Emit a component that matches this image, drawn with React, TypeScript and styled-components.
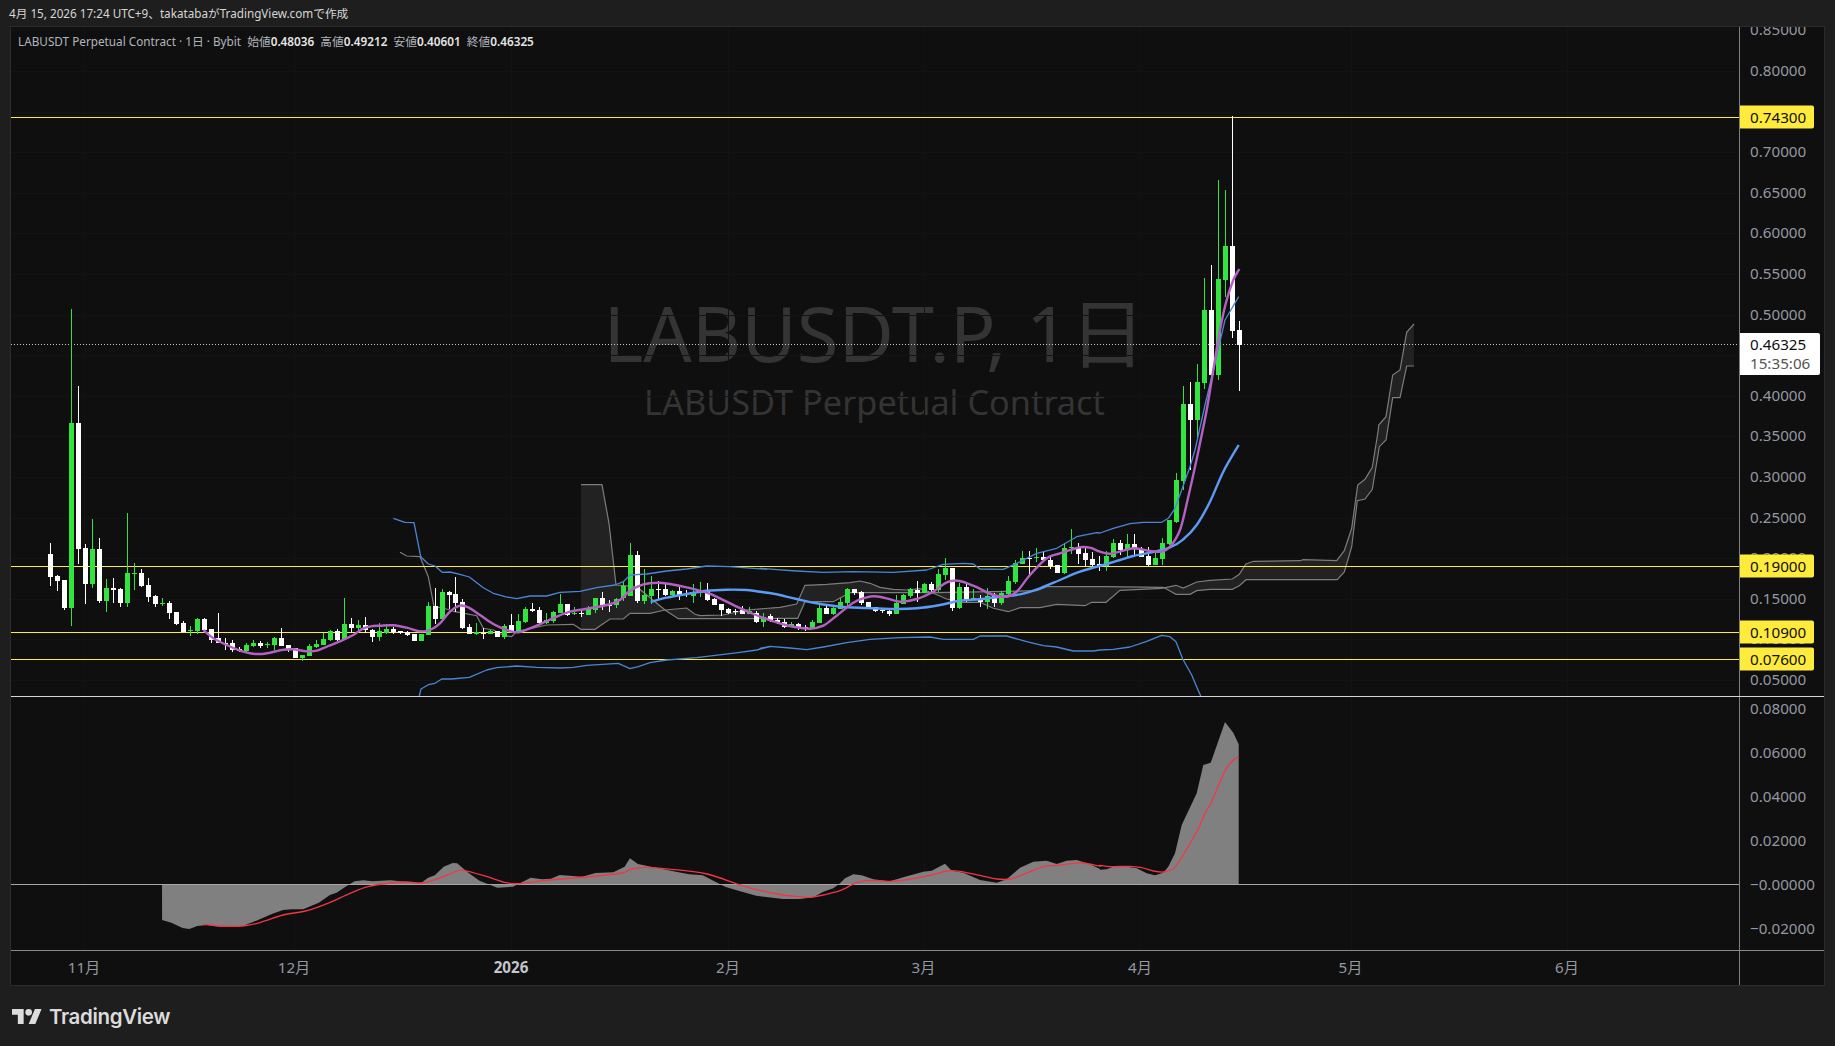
import React from 'react';
import styled, { createGlobalStyle } from 'styled-components';

type Pt = [number, number];
type Row = [string, number, number, number, number];

const FONT = '"Noto Sans", "Noto Sans CJK JP", sans-serif';

const GlobalStyle = createGlobalStyle`
  html, body { margin: 0; padding: 0; background: #1e1e1e; }
  #root { height: 100vh; }
`;

const Page = styled.div`
  height: 1046px;
  display: flex;
  flex-direction: column;
  background: #1e1e1e;
  font-family: ${FONT};
  overflow: hidden;
`;

const TopBar = styled.div`
  height: 26px;
  flex: none;
  padding: 0 0 1px 9px;
  box-sizing: border-box;
  display: flex;
  align-items: center;
  font-size: 11.7px;
  color: #d6d6d6;
  white-space: pre;
`;

const Frame = styled.div`
  margin: 0 10px;
  height: 960px;
  flex: none;
  box-sizing: border-box;
  border: 1px solid #2b2b2b;
  background: #0f0f0f;
  display: flex;
  flex-direction: column;
`;

const PaneRow = styled.div<{ $height: number; $line: string }>`
  height: ${p => p.$height}px;
  flex: none;
  box-sizing: border-box;
  display: flex;
  border-bottom: 1px solid ${p => p.$line};
`;

const Plot = styled.div`
  width: 1728px;
  flex: none;
  position: relative;
  overflow: hidden;
`;

const ChartSvg = styled.svg`
  display: block;
  position: relative;
`;

const Axis = styled.div`
  flex: 1;
  position: relative;
  overflow: hidden;
  border-left: 1px solid #808080;
`;

const Tick = styled.div`
  position: absolute;
  left: 10px;
  transform: translateY(calc(-50% - 1.5px));
  font-size: 15.2px;
  line-height: 18px;
  color: #9598a1;
`;

const LevelTag = styled.div`
  position: absolute;
  left: 0;
  width: 74px;
  height: 23px;
  box-sizing: border-box;
  padding-left: 10px;
  transform: translateY(-50%);
  background: #ffeb3b;
  border-radius: 0 2px 2px 0;
  font-size: 15.2px;
  line-height: 22px;
  color: #0f0f0f;
`;

const PriceTag = styled.div`
  position: absolute;
  left: 0;
  top: 306px;
  width: 80px;
  height: 42px;
  box-sizing: border-box;
  padding: 2px 0 0 10px;
  background: #fff;
  border-radius: 0 2px 2px 0;
  font-size: 15.2px;
  line-height: 19px;
  color: #0f0f0f;
`;

const Countdown = styled.div`
  color: #555;
`;

const Legend = styled.div`
  position: absolute;
  z-index: 2;
  left: 7px;
  top: 6px;
  font-size: 11.75px;
  line-height: 16px;
  color: #b2b5be;
  white-space: pre;
`;

const LegendValue = styled.b`
  color: #e4e4e4;
  font-weight: 600;
`;

const Watermark = styled.div`
  position: absolute;
  inset: 0;
  padding: 0 1px 11px 0;
  box-sizing: border-box;
  display: flex;
  flex-direction: column;
  align-items: center;
  justify-content: center;
  color: #343434;
  white-space: nowrap;
`;

const WatermarkTitle = styled.div`
  font-size: 76px;
  line-height: 92px;
`;

const WatermarkName = styled.div`
  font-size: 34.3px;
  line-height: 46px;
  color: #343434;
`;

const TimeRow = styled.div`
  flex: 1;
  display: flex;
`;

const TimeLabels = styled.div`
  width: 1728px;
  flex: none;
  position: relative;
`;

const TimeLabel = styled.div<{ $bold?: boolean }>`
  position: absolute;
  top: 7px;
  transform: translateX(-50%);
  font-size: 15.2px;
  line-height: 18px;
  font-weight: ${p => (p.$bold ? 700 : 400)};
  color: ${p => (p.$bold ? '#c4c6cc' : '#9598a1')};
`;

const Footer = styled.div`
  flex: 1;
  display: flex;
  align-items: center;
  gap: 7px;
  padding: 0 0 0 12px;
`;

const Wordmark = styled.span`
  font-family: Inter, sans-serif;
  font-size: 20.5px;
  font-weight: 600;
  letter-spacing: -0.35px;
  color: #dcdcdc;
`;

// crops were read at 3x, so values are divided back to page pixels
const trace = (x0: number, y0: number, flat: number[], sx = 3): Pt[] => {
  const out: Pt[] = [];
  for (let i = 0; i < flat.length; i += 2) out.push([x0 + flat[i] / sx, y0 + flat[i + 1] / 3]);
  return out;
};

const rowsAt = (y0: number, rows: Row[]): Row[] =>
  rows.map(([c, a, b, d, e]) => [c, y0 + a / 3, y0 + b / 3, y0 + d / 3, y0 + e / 3] as Row);

const candles: Row[] = [
  ...rowsAt(290, [
    ['w',759,792,861,888],['w',855,858,873,903],['w',870,870,954,960],['g',57,399,954,1008],['w',288,399,777,822],
    ['w',762,774,882,942],['g',687,777,882,894],['w',744,777,933,939],['g',867,894,933,966],['w',864,894,900,939],
    ['w',894,897,939,951],['g',669,849,939,951],['g',819,849,852,900],['w',837,849,888,891],['w',864,885,921,936],
    ['w',915,918,942,951],['g',924,939,942,948],['w',933,939,969,987],['w',966,966,1002,1005],['w',993,999,1027,1027],
    ['g',1008,1021,1024,1038],['g',984,987,1023,1032],['w',984,987,1020,1023],['w',1017,1017,1050,1059],['w',969,1045,1059,1059],
    ['w',1044,1060,1063,1080],['w',1050,1059,1080,1086],['w',1071,1077,1083,1086],['g',1059,1065,1083,1089],['g',1050,1059,1068,1071],
    ['w',1053,1059,1068,1074],['g',1056,1063,1066,1074],['g',1041,1044,1065,1080],['w',1014,1044,1068,1068],['w',1065,1065,1077,1086],
    ['w',1074,1074,1104,1104],['g',1095,1095,1104,1113],['g',1062,1068,1098,1098],['g',1050,1062,1071,1074],['g',1029,1047,1065,1065],
    ['g',1020,1023,1050,1053],['w',1017,1023,1050,1053],['g',924,1002,1047,1050],['w',984,1002,1014,1029],['g',990,1005,1014,1020],
    ['w',981,1005,1020,1029],['w',1017,1020,1041,1056],['g',999,1023,1041,1053],['g',1002,1017,1029,1032],['w',1011,1017,1026,1032],
    ['w',1023,1023,1029,1032],
  ]),
  ...rowsAt(470, [
    ['w',483,486,494,497],['w',491,491,512,512],['g',491,491,513,513],['g',396,408,495,495],['w',354,408,447,462],
    ['g',357,366,447,447],['w',363,366,375,417],['w',321,372,399,426],['w',387,396,474,477],['w',462,471,492,492],
    ['g',459,486,492,495],['w',474,489,491,507],['g',480,483,491,492],['w',483,483,501,501],['g',462,468,501,507],
    ['w',432,465,486,489],['g',432,453,483,486],['g',411,417,456,459],['w',399,417,423,426],['w',411,420,459,462],
    ['g',429,450,459,462],['g',423,426,453,459],['g',372,402,429,429],['w',402,402,435,438],['g',411,429,432,435],
    ['w',417,429,431,441],['g',408,417,435,435],['g',384,384,420,429],['w',366,384,405,420],['w',390,405,408,426],
    ['g',384,387,405,414],['g',336,348,384,393],['g',219,255,378,378],['w',243,255,393,399],['g',297,375,393,402],
    ['g',318,357,378,402],['w',333,356,359,390],['w',342,357,375,378],['g',360,363,375,378],['w',351,363,378,390],
    ['w',360,373,376,381],['g',342,366,378,399],['g',336,366,369,381],['w',339,360,390,393],['w',384,387,405,405],
    ['w',402,402,420,438],['w',414,417,429,432],['w',417,423,426,435],['w',408,420,432,432],['g',411,423,432,432],
    ['w',423,429,456,459],['g',429,441,456,471],['w',432,438,453,456],
  ]),
  ...rowsAt(500, [
    ['w',354,360,369,372],['w',357,366,381,384],['g',366,372,378,381],['w',369,372,384,390],['w',375,381,384,393],
    ['g',360,366,384,384],['g',315,324,369,369],['w',318,324,342,342],['g',321,324,342,345],['g',294,306,327,327],
    ['g',264,267,309,324],['w',267,267,279,285],['w',273,276,309,315],['w',306,306,324,327],['w',321,321,333,336],
    ['w',324,330,333,339],['w',330,333,342,348],['g',285,309,342,342],['g',282,285,312,312],['g',264,267,288,294],
    ['w',243,270,279,306],['g',249,252,279,279],['w',246,252,270,279],['g',207,222,270,276],['g',174,204,225,240],
    ['w',204,204,324,333],['g',249,261,324,327],['w',252,261,303,306],['g',267,294,297,300],['w',285,294,306,321],
    ['g',264,288,306,327],['w',279,288,309,321],['g',273,279,309,315],['g',228,243,282,285],['g',180,189,246,252],
    ['g',153,174,192,192],['w',153,174,177,228],['g',144,171,174,186],['w',156,171,180,183],['w',168,180,198,207],
    ['w',195,195,219,219],['g',129,144,219,222],['g',87,141,144,162],['w',129,144,162,192],['w',138,159,180,198],
    ['w',156,177,195,198],['w',168,192,201,213],
  ]),
  ...rowsAt(430, [
    ['g',363,378,408,423],['g',327,339,381,384],['w',330,339,360,375],['g',312,342,360,381],['w',312,342,354,381],
    ['w',351,360,381,381],['w',351,378,405,408],['g',369,384,405,405],['g',324,339,387,405],['g',270,270,342,345],
    ['g',129,150,276,279],
  ]),
  ['g',386,404,481,490],
  ['w',382,404,420,470],
  ['g',364,382,420,440],
  ...rowsAt(100, [
    ['g',534,630,849,867],['w',495,630,825,828],['g',240,537,825,840],['g',270,438,540,591],['w',48,438,693,714],
    ['w',663,690,735,873],
  ]),
];

const purpleLine: Pt[] = [
  ...trace(0, 290, [610,1020,640,1045,680,1065,720,1082,750,1090,780,1092,810,1088,850,1079,880,1078,920,1084,950,1082,985,1068,1020,1054,1060,1035,1090,1015,1120,1008]),
  ...trace(380, 470, [0,467,40,466,80,473,120,484,150,480,180,460,210,425,240,407,265,412,300,435,340,462,380,480,415,487,450,475,490,458,530,440,570,425,620,416,680,405,720,390,750,362,790,343,830,338,870,342,920,352,980,368,1020,385,1070,410,1120,432,1160,447]),
  ...trace(760, 500, [0,350,50,367,100,380,150,386,190,377,230,347,280,308,320,292,345,289,380,295,420,305,470,297,520,275,560,247,595,242,640,257,700,285,740,290,770,275,810,225,860,175,900,160,960,142,990,143]),
  ...trace(1100, 430, [0,365,30,371,70,362,105,355,150,363,185,365,210,350,240,300,265,200,285,110]),
  ...trace(1100, 100, [300,1030,320,930,340,810,360,690,380,600,400,540,418,507]),
];

const blueLine: Pt[] = [
  ...trace(380, 470, [812,396,860,383,920,372,980,362,1040,359,1100,360,1160,368]),
  ...trace(760, 500, [0,275,50,283,110,297,170,310,240,320,320,324,400,327,470,325,540,315,600,302,660,298,720,290,780,283,840,265,900,240,960,215]),
  ...trace(1100, 430, [20,402,60,390,100,378,150,368,210,352,250,328,290,285,330,215,370,125,416,45]),
];

const upperBand: Pt[] = [
  ...trace(380, 470, [40,145,75,157,102,158,122,260,145,282,165,288,187,307,210,306,240,313,268,321,310,353,340,370,375,380,410,386,450,378,500,378,540,367,600,364,650,353,705,345,730,335,750,315,800,312,860,303,920,297,980,288,1050,290,1120,295,1160,298]),
  ...trace(760, 500, [0,205,50,209,110,213,190,217,280,215,400,217,500,210,550,193,610,190,640,192,660,207,730,208,770,190,830,160,890,145,950,110,1010,98]),
  ...trace(1100, 430, [0,309,40,295,90,281,130,277,185,277,205,265,225,235,245,180,270,110]),
  ...trace(1100, 100, [285,1050,315,915,345,790,375,660,416,590]),
];

const lowerBand: Pt[] = [
  ...trace(380, 470, [118,678,123,657,145,644,165,640,185,627,215,627,268,622,320,600,350,593,410,588,470,592,540,594,580,592,620,586,715,580,730,587,750,596,775,590,810,578,860,570,950,563,1000,557,1080,547,1130,540,1170,530]),
  ...trace(760, 500, [0,445,30,439,90,444,140,449,190,441,260,428,330,418,420,413,510,411,550,418,640,418,660,408,740,408,800,425,850,437,890,441,940,453,1000,453]),
  ...trace(1100, 430, [0,660,40,658,90,651,140,634,185,616,210,620,228,635,248,687,275,735,292,775,302,798]),
];

const leadA: Pt[] = [
  ...trace(380, 470, [60,247,80,258,120,260,145,320,162,410,190,414,225,425,290,437,310,475,340,480,373,497,395,500,410,484,440,478,500,465,580,463,603,478,645,478,690,447,730,447,750,430,810,430,855,420,920,414,945,433,960,437,1030,435,1100,420]),
  ...trace(760, 500, [60,322,110,312,135,256,200,253,270,248,300,243,330,250,360,262,400,268,440,270,480,266,520,280,560,297,610,307,660,307,700,325,745,335,780,323,840,323,890,313,975,317,995,307,1020,307]),
  ...trace(1100, 430, [18,517,60,481,185,475,228,466,250,474,290,456,330,451,397,447,418,433,437,403,460,394,600,392,610,389,710,392,733,362,755,295,773,165,795,148,817,112,835,0]),
  ...trace(1100, 100, [836,975,858,950,878,825,900,810,920,697,942,672]),
];

const leadB: Pt[] = [
  ...trace(380, 470, [603,44,666,44,687,160,708,345,770,350,855,420,895,446,1100,446]),
  ...trace(760, 500, [60,355,113,355,135,305,220,305,270,278,520,278,700,275,830,272,860,260,1020,260]),
  ...trace(1100, 430, [18,470,190,472,228,493,270,493,290,482,330,478,397,478,418,467,438,449,712,449,733,426,755,350,772,212,795,207,817,178,838,50]),
  ...trace(1100, 100, [858,1020,878,893,900,893,920,798,942,798]),
];

const histLine: Pt[] = [
  [162, 884],
  ...trace(100, 690, [139,690,160,698,185,714,200,717,218,708,240,705,270,711,320,708,350,692,385,672,410,660,430,658,455,658,490,638,515,615,530,608,550,590,570,574,590,571,610,574,650,571,690,576,720,578,735,563,750,556,770,530,790,519,800,520,825,548,850,572,890,593,925,590,965,563,990,568,1010,566,1030,555,1080,560,1110,549,1150,547,1175,530,1187,505,1205,522,1240,532,1290,545,1320,553,1350,556,1400,590,1430,602,1470,617,1530,627], 2.24),
  ...trace(790, 840, [30,177,70,172,100,155,130,145,150,130,165,115,190,103,215,106,250,118,300,124,345,110,400,95,425,92,465,71,485,92,520,98,570,120,620,128,650,118,690,83,730,65,770,62,800,72,830,62,860,60,900,73,930,87]),
  ...trace(1100, 700, [0,509,20,508,40,500,80,500,110,505,140,520,165,526,190,518,205,500,225,460,245,375,290,280,310,195,332,188,375,66,400,98,416,133]),
  [1238.7, 884],
];

const signalLine: Pt[] = [
  ...trace(100, 690, [232,703,270,708,320,708,360,697,410,675,460,663,510,640,560,610,600,590,650,579,690,576,720,579,760,565,800,543,815,541,860,557,910,578,940,581,980,574,1030,567,1090,561,1170,549,1190,537,1225,532,1280,538,1360,552,1430,583,1480,602,1530,615], 2.24),
  ...trace(790, 840, [30,170,60,172,100,165,150,152,200,128,240,121,300,124,350,119,420,106,470,93,510,94,570,106,620,117,660,117,700,103,760,80,800,76,850,70,880,69,930,78]),
  ...trace(1100, 700, [0,496,30,500,90,499,125,503,160,513,190,516,210,510,230,495,290,395,315,340,335,305,375,212,400,181,416,172]),
];

const poly = (pts: Pt[]) => pts.map(([x, y]) => `${x.toFixed(1)},${y.toFixed(1)}`).join(' ');

// catmull-rom through the read points, so the averages don't look faceted
const smooth = (pts: Pt[]) => {
  let d = `M${pts[0][0].toFixed(1)} ${pts[0][1].toFixed(1)}`;
  for (let i = 0; i < pts.length - 1; i++) {
    const p0 = pts[i - 1] || pts[i];
    const p1 = pts[i];
    const p2 = pts[i + 1];
    const p3 = pts[i + 2] || p2;
    const c1 = [p1[0] + (p2[0] - p0[0]) / 6, p1[1] + (p2[1] - p0[1]) / 6];
    const c2 = [p2[0] - (p3[0] - p1[0]) / 6, p2[1] - (p3[1] - p1[1]) / 6];
    d += `C${c1[0].toFixed(1)} ${c1[1].toFixed(1)} ${c2[0].toFixed(1)} ${c2[1].toFixed(1)} ${p2[0].toFixed(1)} ${p2[1].toFixed(1)}`;
  }
  return d;
};

const priceY = (v: number) => 117.3 + (0.743 - v) * 812;
const oscY = (v: number) => 884.5 - v * 2200;

const priceTicks = ['0.85000','0.80000','0.75000','0.70000','0.65000','0.60000','0.55000','0.50000','0.45000','0.40000','0.35000','0.30000','0.25000','0.20000','0.15000','0.10000','0.05000'];
const levels = [0.743, 0.19, 0.109, 0.076];
const oscTicks: [string, number][] = [['0.08000',0.08],['0.06000',0.06],['0.04000',0.04],['0.02000',0.02],['−0.00000',0],['−0.02000',-0.02]];
const months: [string, number, boolean?][] = [['11月',84],['12月',294],['2026',511,true],['2月',728],['3月',923.5],['4月',1140],['5月',1350.5],['6月',1567]];

const GREEN = '#33e33f';
const GRID = '#131313';

function Candles() {
  return (
    <g shapeRendering="crispEdges">
      {candles.map(([c, hi, top, bot, lo], i) => {
        const x = Math.floor(50.347 + 6.994 * i);
        const fill = c === 'g' ? GREEN : '#ffffff';
        const yTop = Math.round(top);
        return (
          <g key={i} fill={fill}>
            <rect x={x} y={Math.round(hi)} width={1} height={Math.max(1, Math.round(lo) - Math.round(hi))} />
            <rect x={x - 2} y={yTop} width={5} height={Math.max(1, Math.round(bot) - yTop)} />
          </g>
        );
      })}
    </g>
  );
}

function MainChart() {
  const cloudStart = leadA.findIndex(p => p[0] >= leadB[0][0]);
  const cloud = [...leadA.slice(cloudStart), ...[...leadB].reverse()];
  return (
    <ChartSvg width={1728} height={669} viewBox="11 27 1728 669">
      <g stroke={GRID} shapeRendering="crispEdges">
        {priceTicks.map(t => (
          <line key={t} x1={11} x2={1739} y1={Math.round(priceY(+t)) + 0.5} y2={Math.round(priceY(+t)) + 0.5} />
        ))}
        {months.map(m => (
          <line key={m[0]} x1={m[1] + 0.5} x2={m[1] + 0.5} y1={27} y2={696} />
        ))}
      </g>
      <polygon points={poly(cloud)} fill="#222222" fillRule="evenodd" />
      <polyline points={poly(leadA)} fill="none" stroke="#7d7d7d" strokeWidth={1.2} />
      <polyline points={poly(leadB)} fill="none" stroke="#7d7d7d" strokeWidth={1.2} />
      {levels.map(v => (
        <rect key={v} x={11} y={Math.round(priceY(v))} width={1728} height={1} fill="#ffeb3b" />
      ))}
      <line x1={11} x2={1739} y1={344.5} y2={344.5} stroke="#c8c8c8" strokeDasharray="1 2" />
      <Candles />
      <polyline points={poly(upperBand)} fill="none" stroke="#4a86d6" strokeWidth={1.3} strokeLinejoin="round" />
      <polyline points={poly(lowerBand)} fill="none" stroke="#4a86d6" strokeWidth={1.3} strokeLinejoin="round" />
      <path d={smooth(blueLine)} fill="none" stroke="#5b9cf6" strokeWidth={2.4} />
      <path d={smooth(purpleLine)} fill="none" stroke="#b561c4" strokeWidth={2.4} />
    </ChartSvg>
  );
}

function Oscillator() {
  return (
    <ChartSvg width={1728} height={253} viewBox="11 697 1728 253">
      <g stroke={GRID} shapeRendering="crispEdges">
        {months.map(m => (
          <line key={m[0]} x1={m[1] + 0.5} x2={m[1] + 0.5} y1={697} y2={950} />
        ))}
      </g>
      <polygon points={poly(histLine)} fill="#808080" />
      <rect x={11} y={884} width={1728} height={1} fill="#a6a6a6" />
      <path d={smooth(signalLine)} fill="none" stroke="#f23645" strokeWidth={1.3} />
    </ChartSvg>
  );
}

function TvLogo() {
  return (
    <svg width="30" height="15" viewBox="0 4 36 18" fill="#dcdcdc">
      <path d="M14 22H7V11H0V4h14v18zM28 22h-8l7.5-18h8L28 22z" />
      <circle cx="20" cy="8" r="4" />
    </svg>
  );
}

export default function App() {
  return (
    <Page>
      <GlobalStyle />
      <TopBar>4月 15, 2026 17:24 UTC+9、takatabaがTradingView.comで作成</TopBar>
      <Frame>
        <PaneRow $height={670} $line="#d6d6da">
          <Plot>
            <Watermark>
              <WatermarkTitle>LABUSDT.P, 1日</WatermarkTitle>
              <WatermarkName>LABUSDT Perpetual Contract</WatermarkName>
            </Watermark>
            <MainChart />
            <Legend>
              LABUSDT Perpetual Contract · 1日 · Bybit{'  '}始値<LegendValue>0.48036</LegendValue>{'  '}高値
              <LegendValue>0.49212</LegendValue>{'  '}安値<LegendValue>0.40601</LegendValue>{'  '}終値
              <LegendValue>0.46325</LegendValue>
            </Legend>
          </Plot>
          <Axis>
            {priceTicks.map(t => (
              <Tick key={t} style={{ top: priceY(+t) - 27 }}>{t}</Tick>
            ))}
            {levels.map(v => (
              <LevelTag key={v} style={{ top: priceY(v) - 27 }}>{v.toFixed(5)}</LevelTag>
            ))}
            <PriceTag>
              0.46325
              <Countdown>15:35:06</Countdown>
            </PriceTag>
          </Axis>
        </PaneRow>
        <PaneRow $height={254} $line="#8a8a8a">
          <Plot>
            <Oscillator />
          </Plot>
          <Axis>
            {oscTicks.map(([t, v]) => (
              <Tick key={t} style={{ top: oscY(v) - 697 }}>{t}</Tick>
            ))}
          </Axis>
        </PaneRow>
        <TimeRow>
          <TimeLabels>
            {months.map(([label, x, bold]) => (
              <TimeLabel key={label} $bold={bold} style={{ left: x - 11 }}>{label}</TimeLabel>
            ))}
          </TimeLabels>
          <Axis />
        </TimeRow>
      </Frame>
      <Footer>
        <TvLogo />
        <Wordmark>TradingView</Wordmark>
      </Footer>
    </Page>
  );
}
